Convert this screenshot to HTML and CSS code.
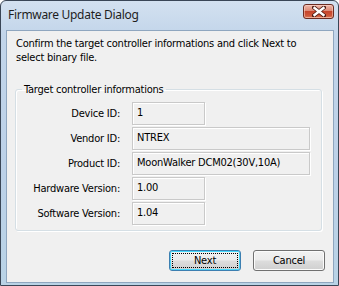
FILE: index.html
```html
<!DOCTYPE html>
<html>
<head>
<meta charset="utf-8">
<link rel="stylesheet" href="styles.css">
</head>
<body>
<div class="window">
  <div class="titlebar">
    <span class="title">Firmware Update Dialog</span>
    <div class="close">
      <svg width="14" height="11" viewBox="0 0 14 11">
        <path d="M2 1.5 L12 9.5 M12 1.5 L2 9.5" stroke="#4a1a12" stroke-width="4" stroke-linecap="square"/>
        <path d="M2.5 2 L11.5 9 M11.5 2 L2.5 9" stroke="#ffffff" stroke-width="2.4" stroke-linecap="square"/>
      </svg>
    </div>
  </div>
  <div class="client">
    <p class="intro">Confirm the target controller informations and click Next to<br>select binary file.</p>
    <fieldset class="group">
      <legend class="legend">Target controller informations</legend>
      <div class="rows">
        <span class="label">Device ID:</span><div class="field short">1</div>
        <span class="label">Vendor ID:</span><div class="field long">NTREX</div>
        <span class="label">Product ID:</span><div class="field long">MoonWalker DCM02(30V,10A)</div>
        <span class="label">Hardware Version:</span><div class="field short">1.00</div>
        <span class="label">Software Version:</span><div class="field short">1.04</div>
      </div>
    </fieldset>
    <div class="buttons">
      <button class="btn default"><span class="focus">Next</span></button>
      <button class="btn">Cancel</button>
    </div>
  </div>
</div>
</body>
</html>
```
FILE: styles.css
```css
html, body {
  margin: 0;
  padding: 0;
  background: #ffffff;
}
.window {
  box-sizing: border-box;
  width: 339px;
  height: 286px;
  border: 1px solid #3a4656;
  border-radius: 6px 6px 0 0;
  background: linear-gradient(180deg, #d3e1f0 0%, #c2d5ea 12%, #bcd1e8 60%, #b9d3e6 100%);
  padding: 0 4px 2px 5px;
  display: flex;
  flex-direction: column;
}
.titlebar {
  height: 29px;
  display: flex;
  align-items: flex-start;
  justify-content: space-between;
  flex: none;
}
.title {
  font-family: "Noto Sans", "Open Sans", sans-serif;
  font-size: 12px;
  letter-spacing: -0.3px;
  color: #1e1e1e;
  margin: 6px 0 0 2px;
  line-height: 16px;
}
.close {
  margin-top: 3px;
  width: 31px;
  height: 15px;
  box-sizing: border-box;
  border: 1px solid #6b2c22;
  border-radius: 3px;
  background: linear-gradient(180deg, #efb7a9 0%, #dd8a76 45%, #c6452c 50%, #cf5a3c 85%, #e08a6a 100%);
  box-shadow: inset 0 0 0 1px rgba(255,220,210,0.5);
  display: flex;
  align-items: center;
  justify-content: center;
}
.client {
  flex: 1;
  border: 1px solid #8fa6bf;
  background: #f0f0f0;
  font-family: "DejaVu Sans Condensed", "DejaVu Sans", sans-serif;
  font-size: 11px;
  letter-spacing: -0.22px;
  color: #000;
  display: flex;
  flex-direction: column;
}
.intro {
  margin: 6px 0 0 9px;
  line-height: 14px;
}
.group {
  margin: 18px 11px 0 8px;
  padding: 6px 0 5px 0;
  border: 1px solid #d5dfe5;
  border-radius: 3px;
  box-shadow: inset 1px 1px 0 #fff, 1px 1px 0 #fff;
}
.legend {
  margin-left: 6px;
  padding: 0 2px;
  line-height: 13px;
}
.rows {
  display: grid;
  grid-template-columns: 104px auto;
  column-gap: 12px;
  row-gap: 2px;
  align-items: center;
}
.label {
  text-align: right;
  white-space: nowrap;
}
.field {
  box-sizing: border-box;
  height: 23px;
  border: 1px solid #c9c9c9;
  box-shadow: 1px 1px 0 #fff, inset 1px 1px 0 #fff;
  padding: 0 0 0 4px;
  line-height: 19px;
  white-space: nowrap;
}
.short { width: 73px; }
.long { width: 178px; }
.buttons {
  display: flex;
  justify-content: flex-end;
  gap: 12px;
  margin: 19px 8px 0 0;
}
.btn {
  box-sizing: border-box;
  width: 72px;
  height: 21px;
  padding: 0;
  font-family: "DejaVu Sans Condensed", "DejaVu Sans", sans-serif;
  font-size: 11px;
  letter-spacing: -0.22px;
  color: #000;
  border: 1px solid #707070;
  border-radius: 3px;
  background: linear-gradient(180deg, #f2f2f2 0%, #ebebeb 48%, #dddddd 52%, #cfcfcf 100%);
  box-shadow: inset 0 0 0 1px #fbfbfb;
  display: flex;
  align-items: center;
  justify-content: center;
}
.btn.default {
  border-color: #3c7fb1;
  box-shadow: inset 0 0 0 1px #48d8fb;
  padding: 2px;
}
.focus {
  flex: 1;
  align-self: stretch;
  border: 1px dotted #000;
  display: flex;
  align-items: center;
  justify-content: center;
}
```
